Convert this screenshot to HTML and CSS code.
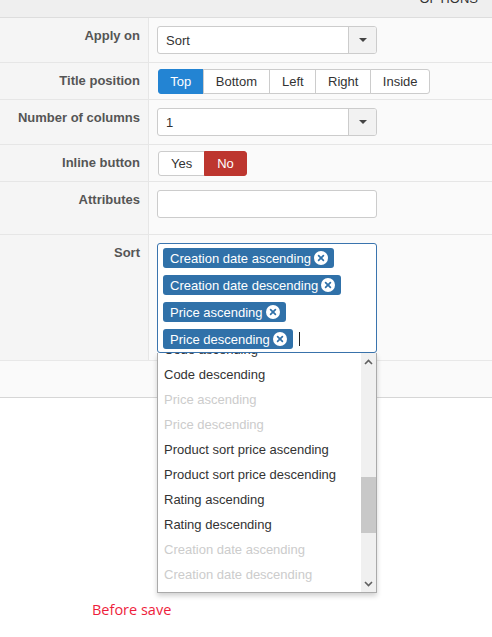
FILE: index.html
```html
<!DOCTYPE html>
<html>
<head>
<meta charset="utf-8">
<title>Options</title>
<link rel="stylesheet" href="styles.css">
</head>
<body>
<div class="panel">
  <div class="panel-head"><span class="panel-title">OPTIONS</span></div>
  <div class="form">
    <div class="row">
      <div class="label">Apply on</div>
      <div class="field">
        <div class="select"><span class="select-value">Sort</span><span class="select-arrow"><span class="caret"></span></span></div>
      </div>
    </div>
    <div class="row">
      <div class="label">Title position</div>
      <div class="field field-btns">
        <div class="btn-group">
          <span class="btn btn-primary btn-narrow">Top</span>
          <span class="btn btn-wide">Bottom</span>
          <span class="btn">Left</span>
          <span class="btn">Right</span>
          <span class="btn">Inside</span>
        </div>
      </div>
    </div>
    <div class="row">
      <div class="label">Number of columns</div>
      <div class="field">
        <div class="select"><span class="select-value">1</span><span class="select-arrow"><span class="caret"></span></span></div>
      </div>
    </div>
    <div class="row">
      <div class="label">Inline button</div>
      <div class="field field-btns">
        <div class="btn-group btn-group-yesno">
          <span class="btn">Yes</span>
          <span class="btn btn-danger">No</span>
        </div>
      </div>
    </div>
    <div class="row">
      <div class="label">Attributes</div>
      <div class="field field-input">
        <div class="text-input"></div>
      </div>
    </div>
    <div class="row row-last">
      <div class="label">Sort</div>
      <div class="field field-sort">
        <div class="chosen">
          <div class="chosen-choices">
            <span class="tag"><span class="tag-text">Creation date ascending</span><svg class="tag-x" width="14" height="14" viewBox="0 0 14 14"><circle cx="7" cy="7" r="7" fill="#fff"/><path d="M4.6 4.6 L9.4 9.4 M9.4 4.6 L4.6 9.4" stroke="#3071a9" stroke-width="1.7" stroke-linecap="round"/></svg></span>
            <span class="tag"><span class="tag-text">Creation date descending</span><svg class="tag-x" width="14" height="14" viewBox="0 0 14 14"><circle cx="7" cy="7" r="7" fill="#fff"/><path d="M4.6 4.6 L9.4 9.4 M9.4 4.6 L4.6 9.4" stroke="#3071a9" stroke-width="1.7" stroke-linecap="round"/></svg></span>
            <span class="tag"><span class="tag-text">Price ascending</span><svg class="tag-x" width="14" height="14" viewBox="0 0 14 14"><circle cx="7" cy="7" r="7" fill="#fff"/><path d="M4.6 4.6 L9.4 9.4 M9.4 4.6 L4.6 9.4" stroke="#3071a9" stroke-width="1.7" stroke-linecap="round"/></svg></span>
            <span class="tag"><span class="tag-text">Price descending</span><svg class="tag-x" width="14" height="14" viewBox="0 0 14 14"><circle cx="7" cy="7" r="7" fill="#fff"/><path d="M4.6 4.6 L9.4 9.4 M9.4 4.6 L4.6 9.4" stroke="#3071a9" stroke-width="1.7" stroke-linecap="round"/></svg></span>
            <span class="cursor"></span>
          </div>
          <div class="chosen-drop">
            <ul class="results">
              <li>Name ascending</li>
              <li>Name descending</li>
              <li>Code ascending</li>
              <li>Code descending</li>
              <li class="disabled">Price ascending</li>
              <li class="disabled">Price descending</li>
              <li>Product sort price ascending</li>
              <li>Product sort price descending</li>
              <li>Rating ascending</li>
              <li>Rating descending</li>
              <li class="disabled">Creation date ascending</li>
              <li class="disabled">Creation date descending</li>
              <li>Modified date ascending</li>
              <li>Modified date descending</li>
            </ul>
            <div class="scrollbar">
              <span class="sb-btn"><svg width="9" height="6" viewBox="0 0 9 6"><polyline points="1,5 4.5,1.5 8,5" fill="none" stroke="#606060" stroke-width="1.6"/></svg></span>
              <span class="sb-track"><span class="sb-thumb"></span></span>
              <span class="sb-btn"><svg width="9" height="6" viewBox="0 0 9 6"><polyline points="1,1 4.5,4.5 8,1" fill="none" stroke="#606060" stroke-width="1.6"/></svg></span>
            </div>
          </div>
        </div>
      </div>
    </div>
  </div>
  <div class="form-foot"></div>
</div>
<p class="note">Before save</p>
<script src="script.js"></script>
</body>
</html>
```
FILE: styles.css
```css
html, body {
  margin: 0;
  padding: 0;
  background: #fff;
}
body {
  font-family: "Liberation Sans", Arial, sans-serif;
  font-size: 13px;
  color: #333;
}
.panel-head {
  height: 17px;
  background: #efefef;
  border-bottom: 1px solid #dddddd;
  overflow: hidden;
  text-align: right;
  padding-right: 14px;
}
.panel-title {
  display: block;
  margin-top: -10px;
  line-height: 18px;
  font-size: 13px;
  color: #333;
}
.row {
  display: flex;
  border-top: 1px solid #e6e6e6;
}
.row:first-child {
  border-top: 0;
}
.row-last {
  border-bottom: 1px solid #e8e8e8;
}
.label {
  width: 149px;
  flex: none;
  box-sizing: border-box;
  background: #f5f5f5;
  border-right: 1px solid #e6e6e6;
  text-align: right;
  padding: 8px 8px 0 0;
  line-height: 19px;
  font-weight: bold;
  color: #555;
}
.field {
  flex: 1;
  background: #fafafa;
  padding: 8px 8px 8px 8px;
}
.field-btns {
  padding-top: 6px;
  padding-bottom: 5px;
}
.field-input {
  padding-bottom: 16px;
}
.field-sort {
  padding-bottom: 7px;
}
.select {
  width: 220px;
  height: 28px;
  box-sizing: border-box;
  border: 1px solid #cccccc;
  border-radius: 3px;
  background: #fff;
  display: flex;
  align-items: stretch;
}
.select-value {
  flex: 1;
  padding-left: 8px;
  padding-top: 1px;
  line-height: 26px;
}
.select-arrow {
  width: 28px;
  box-sizing: border-box;
  border-left: 1px solid #cccccc;
  background: #f2f2f2;
  border-radius: 0 2px 2px 0;
  display: flex;
  align-items: center;
  justify-content: center;
}
.caret {
  width: 0;
  height: 0;
  border-top: 4px solid #444;
  border-left: 4px solid transparent;
  border-right: 4px solid transparent;
  margin-left: 1px;
}
.btn-group {
  display: inline-flex;
  margin-left: 1px;
}
.btn {
  height: 25px;
  box-sizing: border-box;
  padding: 0 11.7px;
  border: 1px solid #cccccc;
  background: #fff;
  line-height: 23px;
  color: #333;
  margin-left: -1px;
}
.btn-narrow {
  padding: 0 11.3px;
}
.btn-wide {
  padding: 0 12.3px;
}
.btn:first-child {
  margin-left: 0;
  border-radius: 3px 0 0 3px;
}
.btn:last-child {
  border-radius: 0 3px 3px 0;
}
.btn-group-yesno .btn {
  padding: 0 12px;
}
.btn-primary {
  background: #2384d3;
  border-color: #2384d3;
  color: #fff;
}
.btn-danger {
  background: #bd362f;
  border-color: #bd362f;
  color: #fff;
}
.text-input {
  width: 220px;
  height: 28px;
  box-sizing: border-box;
  border: 1px solid #cccccc;
  border-radius: 3px;
  background: #fff;
}
.chosen {
  position: relative;
  width: 220px;
}
.chosen-choices {
  box-sizing: border-box;
  height: 110px;
  border: 1px solid #3a74ae;
  border-radius: 3px;
  background: #fff;
  padding: 4px 5px 3px;
  display: flex;
  flex-wrap: wrap;
  align-items: center;
  align-content: flex-start;
  row-gap: 7px;
  column-gap: 6px;
}
.tag {
  display: inline-flex;
  align-items: center;
  gap: 3px;
  height: 20px;
  padding: 0 6px 0 7px;
  background: #3071a9;
  color: #fff;
  border-radius: 3px;
  line-height: 16px;
  white-space: nowrap;
}
.tag-text {
  padding-top: 2px;
}
.tag-x {
  display: block;
  flex: none;
}
.cursor {
  width: 1px;
  height: 14px;
  background: #222;
}
.chosen-drop {
  position: absolute;
  top: 100%;
  left: 0;
  width: 220px;
  height: 240px;
  box-sizing: border-box;
  border: 1px solid #aaaaaa;
  border-top: 0;
  background: #fff;
  box-shadow: 0 3px 5px rgba(0, 0, 0, 0.18);
}
.results {
  height: 239px;
  overflow: hidden;
  margin: 0 15px 0 0;
  padding: 0;
  list-style: none;
}
.results li {
  height: 25px;
  line-height: 25px;
  padding-left: 6px;
  white-space: nowrap;
  color: #333;
}
.results li.disabled {
  color: #cccccc;
}
.scrollbar {
  position: absolute;
  top: 0;
  right: 0;
  bottom: 0;
  width: 15px;
  background: #f0f0f0;
  display: flex;
  flex-direction: column;
}
.sb-btn {
  height: 17px;
  display: flex;
  align-items: center;
  justify-content: center;
}
.sb-btn svg {
  display: block;
}
.sb-track {
  flex: 1;
  display: flex;
  flex-direction: column;
}
.sb-thumb {
  margin-top: 107px;
  height: 56px;
  background: #c8c8c8;
}
.form-foot {
  height: 36px;
  background: #fafafa;
  border-bottom: 1px solid #d6d6d6;
}
.note {
  margin: 202px 0 0;
  padding-left: 92px;
  font-family: "Open Sans", "Noto Sans", sans-serif;
  font-size: 14.5px;
  line-height: 20px;
  color: #ee1d3c;
}
```
FILE: script.js
```js
document.querySelector('.results').scrollTop = 66;
```
